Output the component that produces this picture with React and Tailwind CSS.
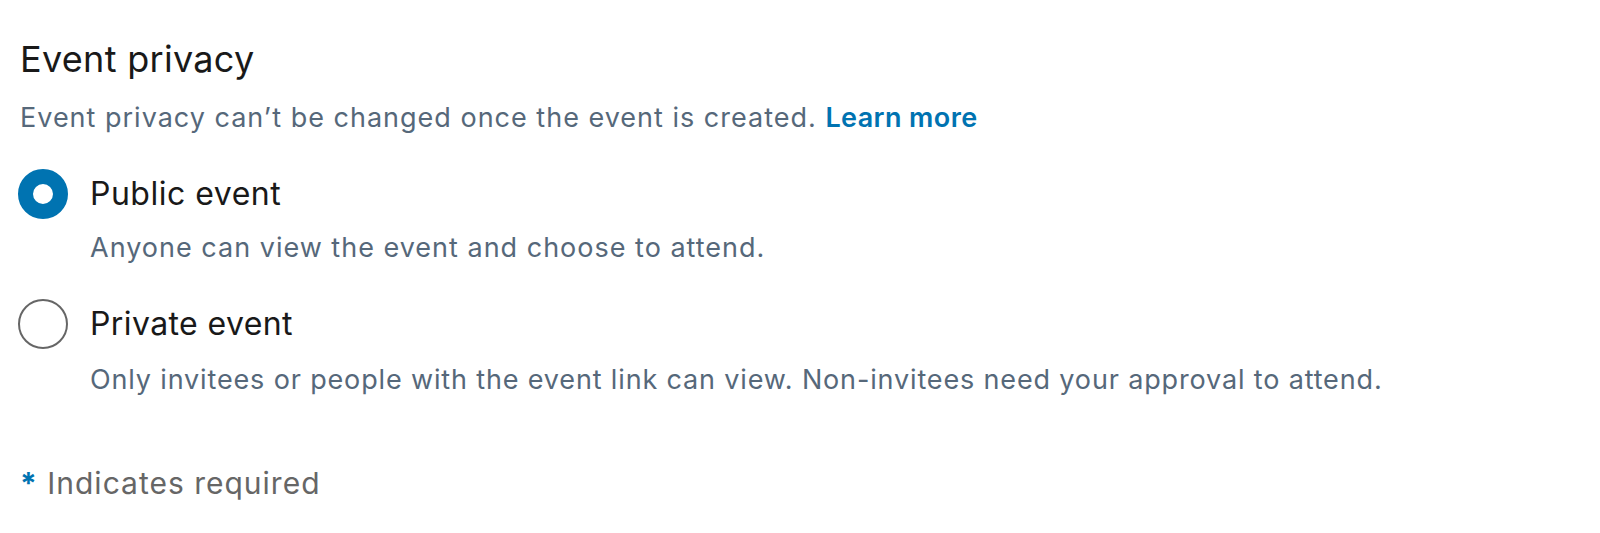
export default function App() {
  return (
    <div className="w-[1600px] h-[533px] bg-white pl-[20px] pt-[37px] font-['Inter',sans-serif]">
      <h2 className="text-[36px] leading-[44px] tracking-[0.3px] text-[#191919] font-normal">Event privacy</h2>
      <p className="mt-[21px] text-[27px] leading-[32px] tracking-[1px] text-[#56687a]">
        Event privacy can’t be changed once the event is created.{" "}
        <a href="#" className="text-[#0073b1] font-semibold tracking-[0.4px]">Learn more</a>
      </p>

      <div className="mt-[35px]">
        <label className="flex items-center h-[50px] gap-[22px] -ml-[2px]">
          <span className="w-[50px] h-[50px] rounded-full border-[15px] border-[#0073b1] bg-white" />
          <span className="text-[32px] leading-[40px] tracking-[0.5px] text-[#191919]">Public event</span>
        </label>
        <p className="mt-[13px] pl-[70px] text-[27px] leading-[32px] tracking-[1px] text-[#56687a]">
          Anyone can view the event and choose to attend.
        </p>
      </div>

      <div className="mt-[35px]">
        <label className="flex items-center h-[50px] gap-[22px] -ml-[2px]">
          <span className="w-[50px] h-[50px] rounded-full border-2 border-[#666666] bg-white" />
          <span className="text-[32px] leading-[40px] tracking-[0.4px] text-[#191919]">Private event</span>
        </label>
        <p className="mt-[15px] pl-[70px] text-[27px] leading-[32px] tracking-[0.85px] text-[#56687a]">
          Only invitees or people with the event link can view. Non-invitees need your approval to attend.
        </p>
      </div>

      <p className="mt-[69px] text-[30px] leading-[36px] tracking-[1px] text-[#666666]">
        <span className="text-[#0073b1] font-bold">*</span> Indicates required
      </p>
    </div>
  )
}
